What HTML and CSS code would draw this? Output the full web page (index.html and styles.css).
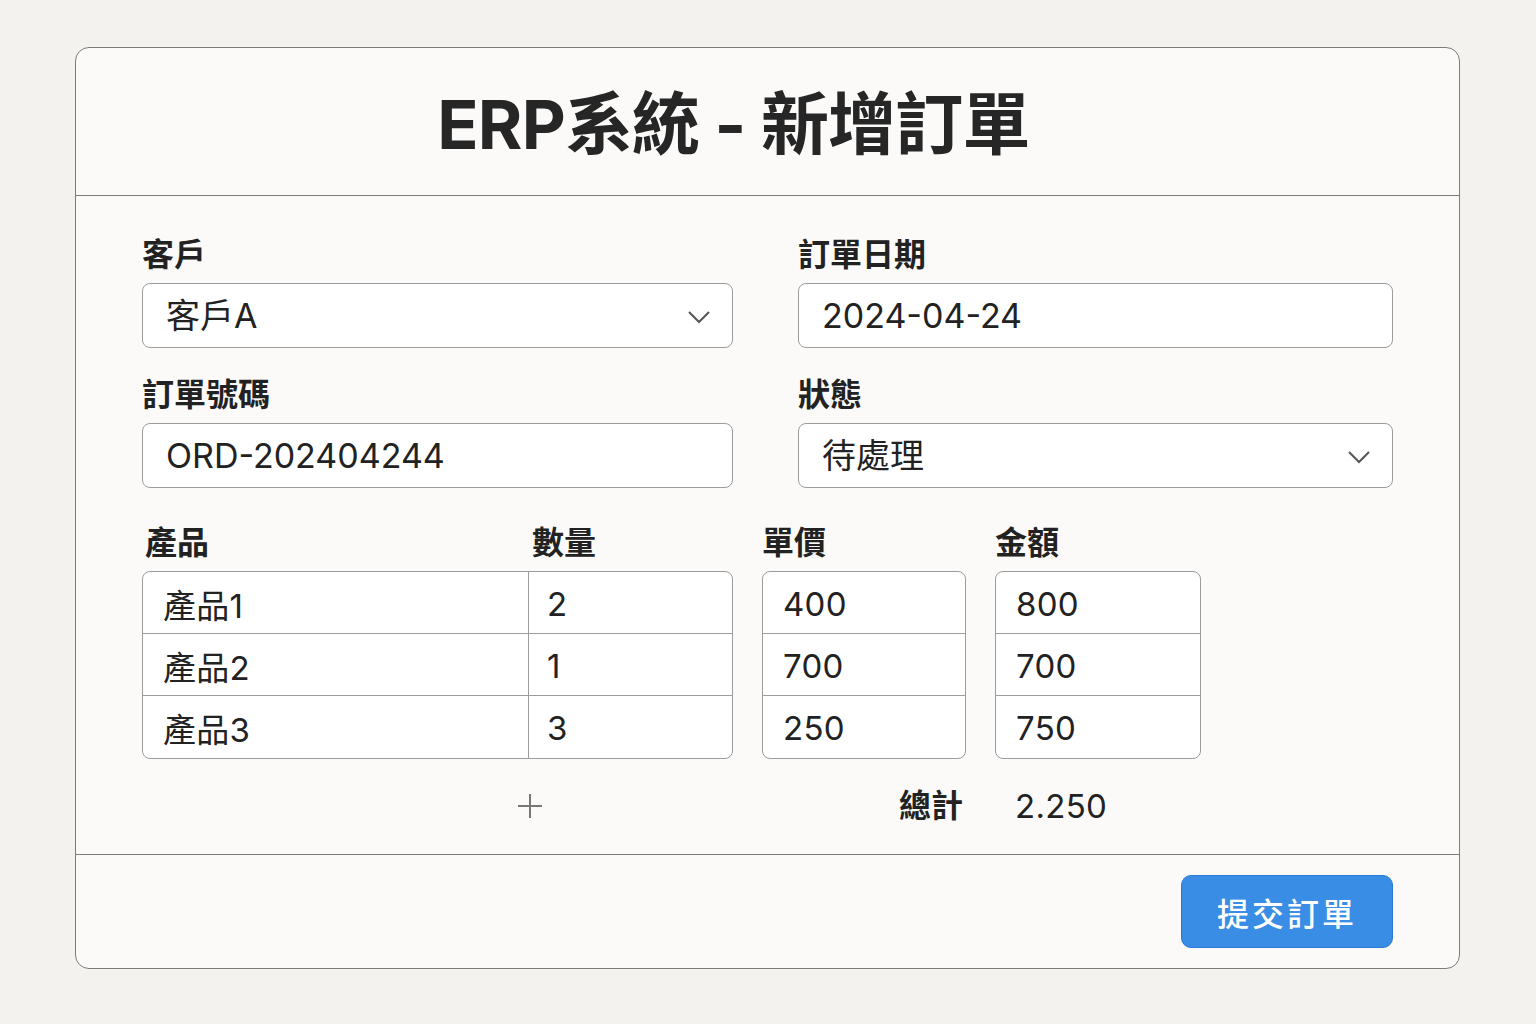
FILE: index.html
```html
<!DOCTYPE html>
<html lang="zh-Hant">
<head>
    <meta charset="UTF-8">
    <meta name="viewport" content="width=device-width, initial-scale=1.0">
    <title>ERP系統 - 新增訂單</title>
    <link rel="stylesheet" href="styles.css">
</head>
<body>
    <div class="card">
        <div class="card-header">
            <h1>ERP系統 - 新增訂單</h1>
        </div>

        <div class="card-body">
            <div class="fields">
                <div class="field">
                    <label class="label">客戶</label>
                    <div class="select-wrap">
                        <select class="control">
                            <option>客戶A</option>
                            <option>客戶B</option>
                        </select>
                        <svg class="chevron" width="24" height="14" viewBox="0 0 24 14"><path d="M2 2 L12 12 L22 2" fill="none" stroke="#555" stroke-width="2"/></svg>
                    </div>
                </div>
                <div class="field">
                    <label class="label">訂單日期</label>
                    <input class="control" type="text" value="2024-04-24">
                </div>
                <div class="field">
                    <label class="label">訂單號碼</label>
                    <input class="control" type="text" value="ORD-202404244">
                </div>
                <div class="field">
                    <label class="label">狀態</label>
                    <div class="select-wrap">
                        <select class="control">
                            <option>待處理</option>
                            <option>已完成</option>
                        </select>
                        <svg class="chevron" width="24" height="14" viewBox="0 0 24 14"><path d="M2 2 L12 12 L22 2" fill="none" stroke="#555" stroke-width="2"/></svg>
                    </div>
                </div>
            </div>

            <div class="items">
                <div class="head-split">
                    <span class="label">產品</span>
                    <span class="label">數量</span>
                </div>
                <span class="label">單價</span>
                <span class="label">金額</span>

                <div class="table table-main">
                    <div class="cell">產品1</div><div class="cell">2</div>
                    <div class="cell">產品2</div><div class="cell">1</div>
                    <div class="cell">產品3</div><div class="cell">3</div>
                </div>
                <div class="table">
                    <div class="cell">400</div>
                    <div class="cell">700</div>
                    <div class="cell">250</div>
                </div>
                <div class="table">
                    <div class="cell">800</div>
                    <div class="cell">700</div>
                    <div class="cell">750</div>
                </div>

                <div class="add-cell">
                    <button class="add-button" title="新增產品">
                        <svg width="26" height="26" viewBox="0 0 26 26"><path d="M13 1 V25 M1 13 H25" stroke="#777" stroke-width="2"/></svg>
                    </button>
                </div>
                <div class="total-label">總計</div>
                <div class="total-value">2.250</div>
            </div>
        </div>

        <div class="card-footer">
            <button class="submit-button">提交訂單</button>
        </div>
    </div>
</body>
</html>
```

FILE: styles.css
```css
* {
    margin: 0;
    padding: 0;
    box-sizing: border-box;
}

body {
    font-family: Inter, "Noto Sans CJK TC", sans-serif;
    background: #f3f2ef;
    color: #222;
    min-height: 100vh;
    padding-top: 47px;
}

.card {
    width: 1385px;
    margin: 0 0 0 75px;
    background: #fbfaf8;
    border: 1.5px solid #7c7c7c;
    border-radius: 14px;
}

.card-header {
    height: 148px;
    display: flex;
    align-items: center;
    justify-content: center;
    border-bottom: 1.5px solid #7c7c7c;
}

.card-header h1 {
    font-size: 68px;
    font-weight: 700;
    color: #262626;
    letter-spacing: -0.8px;
    padding-right: 68px;
    margin-top: -4px;
}

.card-body {
    padding: 39px 66px 28px 66px;
}

.fields {
    display: grid;
    grid-template-columns: 591px 595px;
    column-gap: 65px;
    row-gap: 27px;
}

.label {
    display: block;
    font-size: 32px;
    font-weight: 700;
    line-height: 40px;
    color: #222;
}

.field .label {
    margin-bottom: 8px;
}

.control {
    width: 100%;
    height: 65px;
    border: 1px solid #9c9c9c;
    border-radius: 8px;
    background: #fff;
    font-family: inherit;
    font-size: 34px;
    color: #222;
    padding: 0 23px;
    outline: none;
    appearance: none;
}

.select-wrap {
    position: relative;
}

.chevron {
    position: absolute;
    right: 22px;
    top: 27px;
    pointer-events: none;
}

.items {
    margin-top: 35px;
    display: grid;
    grid-template-columns: 591px 204px 206px;
    column-gap: 29px;
    row-gap: 8px;
}

.head-split {
    display: grid;
    grid-template-columns: 387px 1fr;
    padding-left: 3px;
}

.table {
    border: 1px solid #9c9c9c;
    border-radius: 8px;
    background: #fff;
    overflow: hidden;
    display: grid;
    grid-template-rows: repeat(3, 62px);
}

.table-main {
    grid-template-columns: 386px 1fr;
}

.cell {
    font-size: 33px;
    letter-spacing: 0.3px;
    display: flex;
    align-items: center;
    padding-left: 20px;
    padding-top: 2px;
    border-bottom: 1px solid #9c9c9c;
}

.table .cell:nth-last-child(-n+1) {
    border-bottom: none;
}

.table-main .cell:nth-last-child(-n+2) {
    border-bottom: none;
}

.table-main .cell:nth-child(odd) {
    border-right: 1px solid #9c9c9c;
}

.table-main .cell:nth-child(even) {
    padding-left: 18px;
}

.add-cell {
    margin-top: 19px;
    height: 40px;
    display: flex;
    align-items: center;
    padding-left: 375px;
}

.add-button {
    background: none;
    border: none;
    cursor: pointer;
    display: flex;
}

.total-label {
    margin-top: 19px;
    height: 40px;
    line-height: 40px;
    text-align: right;
    padding-right: 3px;
    font-size: 32px;
    font-weight: 700;
}

.total-value {
    margin-top: 19px;
    height: 40px;
    line-height: 40px;
    padding-left: 20px;
    font-size: 33px;
    letter-spacing: 0.3px;
}

.card-footer {
    border-top: 1.5px solid #7c7c7c;
    padding: 20px 66px 20px 0;
    display: flex;
    justify-content: flex-end;
}

.submit-button {
    width: 212px;
    height: 73px;
    background: #3a8de5;
    border: 1px solid #2b7bd6;
    border-radius: 10px;
    color: #fff;
    font-family: inherit;
    font-size: 32px;
    font-weight: 500;
    letter-spacing: 3px;
    cursor: pointer;
}
```
